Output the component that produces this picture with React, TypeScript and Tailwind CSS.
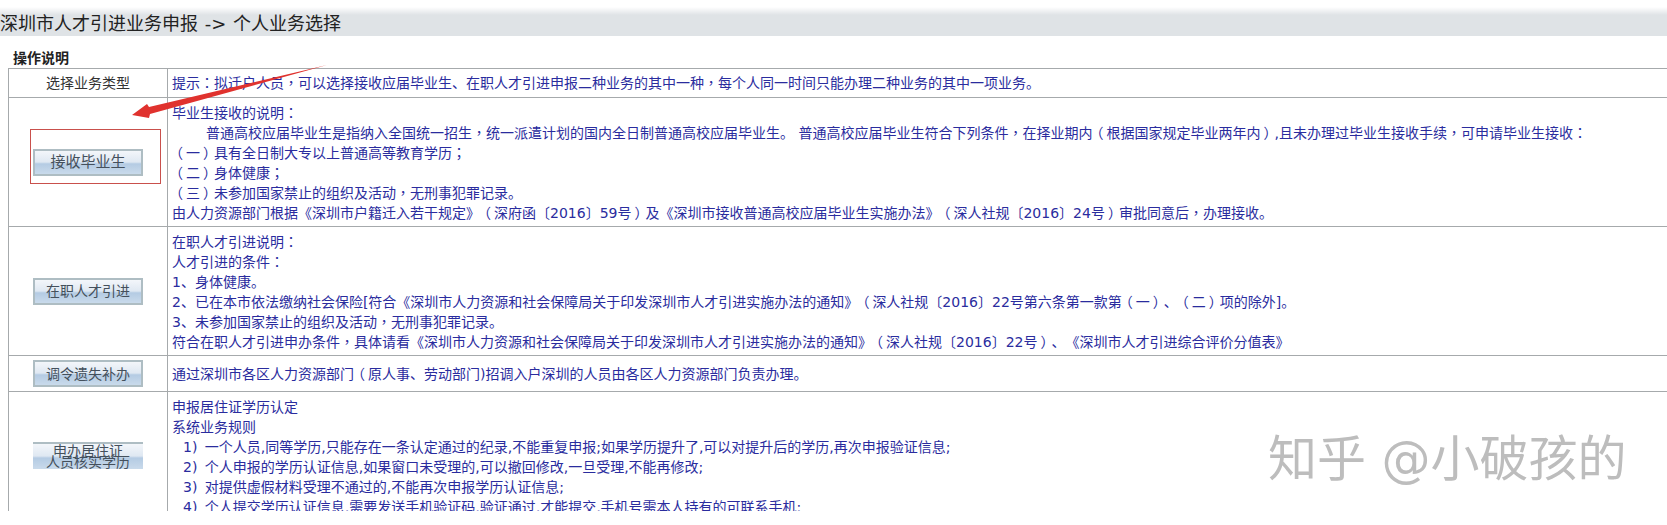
import React from 'react';

const cellBorder = "border border-[#a6aaac]";
const cellText = `${cellBorder} pl-[4px] pr-2 text-left`;
const cellBtn = `${cellBorder} p-0 text-center align-middle`;

// comma, colon, semicolon and brackets sit in the middle of their box in the screenshot
function Punct({ mark }: { mark: string }) {
  if (mark === '（') return <span className="inline-block -translate-x-[3px] leading-none">{mark}</span>;
  if (mark === '）') return <span className="inline-block translate-x-[3px] leading-none">{mark}</span>;
  return <span className="font-['Noto_Sans_CJK_TC',sans-serif] leading-none">{mark}</span>;
}

function Line({ text, className = '' }: { text: string; className?: string }) {
  return (
    <div className={className}>
      {text.split(/([，：；（）])/).map((part, i) =>
        i % 2 === 1 ? <Punct key={i} mark={part} /> : part,
      )}
    </div>
  );
}

function FormButton({ children, className = '' }: { children: React.ReactNode; className?: string }) {
  return (
    <button className={`mx-auto flex h-[27px] w-[110px] items-center justify-center border-2 border-[#aebdc3] bg-[linear-gradient(#f3f6fa_0%,#dfe8f2_48%,#b4cbe3_56%,#c9daeb_100%)] text-[#44505c] ${className}`}>
      {children}
    </button>
  );
}

function App() {
  return (
    <div className="relative h-[525px] w-[1667px] overflow-hidden bg-white font-['DejaVu_Sans','Noto_Sans_CJK_SC',sans-serif] text-[14px] leading-5 text-[#2a2c9e] [text-spacing-trim:space-all]">
      <div className="h-[36px] bg-[linear-gradient(#ffffff_0px,#ffffff_7px,#dfe3e6_15px,#dfe3e6_100%)] pt-[12px] text-[18px] leading-6 whitespace-pre text-[#222] [word-spacing:1px]">
        深圳市人才引进业务申报 -&gt; 个人业务选择
      </div>
      <div className="ml-[13px] h-[32px] pt-[13px] text-[14px] leading-[18px] font-bold text-[#222]">操作说明</div>

      <div className="ml-[8px] h-[443px] overflow-hidden">
        <table className="w-[1680px] table-fixed border-collapse">
          <tbody>
            <tr className="h-[29px]">
              <td className={`w-[159px] ${cellBorder} p-0 text-center text-[#333]`}>选择业务类型</td>
              <td className={`${cellText} align-middle`}>
                <Line text="提示：拟迁户人员，可以选择接收应届毕业生、在职人才引进申报二种业务的其中一种，每个人同一时间只能办理二种业务的其中一项业务。" />
              </td>
            </tr>
            <tr className="h-[129px]">
              <td className={cellBtn}><FormButton className="text-[15px]">接收毕业生</FormButton></td>
              <td className={`${cellText} pt-[5px] align-top`}>
                <Line text="毕业生接收的说明：" />
                <Line className="pl-[34px]" text="普通高校应届毕业生是指纳入全国统一招生，统一派遣计划的国内全日制普通高校应届毕业生。 普通高校应届毕业生符合下列条件，在择业期内（根据国家规定毕业两年内）,且未办理过毕业生接收手续，可申请毕业生接收：" />
                <Line text="（一）具有全日制大专以上普通高等教育学历；" />
                <Line text="（二）身体健康；" />
                <Line text="（三）未参加国家禁止的组织及活动，无刑事犯罪记录。" />
                <Line text="由人力资源部门根据《深圳市户籍迁入若干规定》（深府函〔2016〕59号）及《深圳市接收普通高校应届毕业生实施办法》（深人社规〔2016〕24号）审批同意后，办理接收。" />
              </td>
            </tr>
            <tr className="h-[129px]">
              <td className={cellBtn}><FormButton>在职人才引进</FormButton></td>
              <td className={`${cellText} pt-[5px] align-top`}>
                <Line text="在职人才引进说明：" />
                <Line text="人才引进的条件：" />
                <Line text="1、身体健康。" />
                <Line text="2、已在本市依法缴纳社会保险[符合《深圳市人力资源和社会保障局关于印发深圳市人才引进实施办法的通知》（深人社规〔2016〕22号第六条第一款第（一）、（二）项的除外]。" />
                <Line text="3、未参加国家禁止的组织及活动，无刑事犯罪记录。" />
                <Line text="符合在职人才引进申办条件，具体请看《深圳市人力资源和社会保障局关于印发深圳市人才引进实施办法的通知》（深人社规〔2016〕22号）、《深圳市人才引进综合评价分值表》" />
              </td>
            </tr>
            <tr className="h-[36px]">
              <td className={cellBtn}><FormButton>调令遗失补办</FormButton></td>
              <td className={`${cellText} align-middle`}>
                <Line text="通过深圳市各区人力资源部门（原人事、劳动部门)招调入户深圳的人员由各区人力资源部门负责办理。" />
              </td>
            </tr>
            <tr className="h-[140px]">
              <td className={cellBtn}>
                <FormButton className="mb-[12px] border-x-0 border-b-0 leading-[11px]">
                  <span>申办居住证<br />人员核实学历</span>
                </FormButton>
              </td>
              <td className={`${cellText} pt-[5px] align-top`}>
                <div>申报居住证学历认定</div>
                <div>系统业务规则</div>
                <div className="pl-[11px] [word-spacing:3px]">1) 一个人员,同等学历,只能存在一条认定通过的纪录,不能重复申报;如果学历提升了,可以对提升后的学历,再次申报验证信息;</div>
                <div className="pl-[11px] [word-spacing:3px]">2) 个人申报的学历认证信息,如果窗口未受理的,可以撤回修改,一旦受理,不能再修改;</div>
                <div className="pl-[11px] [word-spacing:3px]">3) 对提供虚假材料受理不通过的,不能再次申报学历认证信息;</div>
                <div className="pl-[11px] [word-spacing:3px]">4) 个人提交学历认证信息,需要发送手机验证码,验证通过,才能提交,手机号需本人持有的可联系手机;</div>
              </td>
            </tr>
          </tbody>
        </table>
      </div>

      {/* annotations on top of the screenshot */}
      <div className="absolute top-[129px] left-[30px] h-[55px] w-[131px] border border-[#c9504c]" />
      <svg className="absolute top-0 left-0" width="340" height="125" viewBox="0 0 340 125">
        <polygon points="327,65 149,107 147,104 132,115 149,118 150,114" fill="#e0322e" />
      </svg>
      <div className="absolute top-[427px] left-[1268px] text-[49px] leading-[66px] whitespace-pre text-[#bdbdbd]">知乎 @小破孩的</div>
    </div>
  );
}

export default App;
